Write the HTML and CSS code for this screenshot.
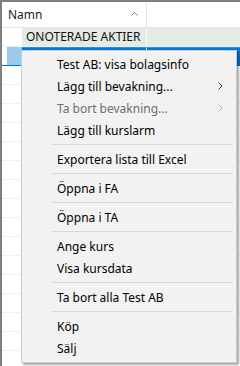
FILE: index.html
```html
<!DOCTYPE html>
<html lang="sv">
<head>
    <meta charset="UTF-8">
    <title>Lista</title>
    <link rel="stylesheet" href="styles.css">
</head>
<body>

    <div class="grid">
        <div class="head">
            <div class="hcell name">
                <span>Namn</span>
                <svg class="sort" width="7" height="5" viewBox="0 0 7 5"><polyline points="0.5,4.5 3.5,1.5 6.5,4.5" fill="none" stroke="#7a7a7a" stroke-width="1"/></svg>
            </div>
            <div class="hcell rest"></div>
        </div>

        <div class="row group">
            <div class="gut"></div>
            <div class="cell name">ONOTERADE AKTIER</div>
            <div class="cell rest"></div>
        </div>
        <div class="row sel">
            <div class="gut"><span class="mark"></span></div>
            <div class="cell name"></div>
            <div class="cell rest"></div>
        </div>
        <div class="row"><div class="gut"></div><div class="cell name"></div><div class="cell rest"></div></div>
        <div class="row"><div class="gut"></div><div class="cell name"></div><div class="cell rest"></div></div>
        <div class="row"><div class="gut"></div><div class="cell name"></div><div class="cell rest"></div></div>
        <div class="row"><div class="gut"></div><div class="cell name"></div><div class="cell rest"></div></div>
        <div class="row"><div class="gut"></div><div class="cell name"></div><div class="cell rest"></div></div>
        <div class="row"><div class="gut"></div><div class="cell name"></div><div class="cell rest"></div></div>
        <div class="row"><div class="gut"></div><div class="cell name"></div><div class="cell rest"></div></div>
        <div class="row"><div class="gut"></div><div class="cell name"></div><div class="cell rest"></div></div>
        <div class="row"><div class="gut"></div><div class="cell name"></div><div class="cell rest"></div></div>
        <div class="row"><div class="gut"></div><div class="cell name"></div><div class="cell rest"></div></div>
        <div class="row"><div class="gut"></div><div class="cell name"></div><div class="cell rest"></div></div>
        <div class="row"><div class="gut"></div><div class="cell name"></div><div class="cell rest"></div></div>
        <div class="row"><div class="gut"></div><div class="cell name"></div><div class="cell rest"></div></div>
        <div class="row"><div class="gut"></div><div class="cell name"></div><div class="cell rest"></div></div>
        <div class="row"><div class="gut"></div><div class="cell name"></div><div class="cell rest"></div></div>
    </div>

    <!-- context menu over the list -->
    <div class="menu">
        <div class="item">Test AB: visa bolagsinfo</div>
        <div class="item">
            <span>Lägg till bevakning...</span>
            <svg class="arrow" width="5" height="8" viewBox="0 0 5 8"><polyline points="0.5,0.5 4,4 0.5,7.5" fill="none" stroke="#333" stroke-width="1"/></svg>
        </div>
        <div class="item disabled">
            <span>Ta bort bevakning...</span>
            <svg class="arrow" width="5" height="8" viewBox="0 0 5 8"><polyline points="0.5,0.5 4,4 0.5,7.5" fill="none" stroke="#b4b4b4" stroke-width="1"/></svg>
        </div>
        <div class="item">Lägg till kurslarm</div>
        <div class="sep"></div>
        <div class="item">Exportera lista till Excel</div>
        <div class="sep"></div>
        <div class="item">Öppna i FA</div>
        <div class="sep"></div>
        <div class="item">Öppna i TA</div>
        <div class="sep"></div>
        <div class="item">Ange kurs</div>
        <div class="item">Visa kursdata</div>
        <div class="sep"></div>
        <div class="item">Ta bort alla Test AB</div>
        <div class="sep"></div>
        <div class="item">Köp</div>
        <div class="item">Sälj</div>
    </div>

</body>
</html>
```

FILE: styles.css
```css
html, body {
    margin: 0;
    padding: 0;
}
body {
    width: 240px;
    height: 366px;
    overflow: hidden;
    position: relative;
    background: #fff;
    font-family: "Noto Sans", "Open Sans", sans-serif;
    font-size: 12px;
    color: #000;
}
.grid {
    height: 364px;
    overflow: hidden;
    border-top: 2px solid #7f7f7f;
    border-left: 2px solid #7f7f7f;
}
.head {
    display: flex;
    height: 25px;
    border-bottom: 1px solid #e5e5e5;
}
.hcell {
    box-sizing: border-box;
    display: flex;
    align-items: center;
}
.hcell.name {
    width: 145px;
    padding-left: 6px;
    padding-right: 8px;
    justify-content: space-between;
    border-right: 1px solid #e5e5e5;
    color: #1a1a1a;
}
.sort {
    margin-top: -3px;
}
.hcell.rest {
    flex: 1;
}
.row {
    display: flex;
    height: 18px;
    border-bottom: 1px solid #f0f0f0;
}
.gut {
    width: 20px;
    display: flex;
    justify-content: flex-end;
}
.cell {
    box-sizing: border-box;
}
.cell.name {
    width: 125px;
    border-right: 1px solid #f0f0f0;
}
.cell.rest {
    flex: 1;
}
.group .cell {
    background: #e4ebe4;
}
.group .cell.name {
    padding-left: 4px;
    line-height: 18px;
    border-right-color: #fafcfa;
    color: #111;
}
.sel {
    border-bottom-color: #0078d7;
}
.sel .mark {
    width: 15px;
    background: #99c9ef;
}
.sel .cell {
    background: #0078d7;
    border-top: 1px solid #1e90ff;
}
.sel .cell.name {
    border-right-color: #cfe4f7;
}

.menu {
    position: absolute;
    left: 21px;
    top: 50px;
    width: 216px;
    height: 313px;
    box-sizing: border-box;
    padding: 2px 0;
    background: #f2f2f2;
    border: 1px solid #cccccc;
    box-shadow: 2px 2px 2px rgba(0, 0, 0, 0.35);
}
.item {
    height: 22px;
    display: flex;
    align-items: center;
    justify-content: space-between;
    padding-left: 35px;
    padding-right: 13px;
    white-space: nowrap;
}
.item.disabled {
    color: #6d6d6d;
}
.sep {
    height: 1px;
    margin: 3px 3px 3px 30px;
    background: #d7d7d7;
}
```
